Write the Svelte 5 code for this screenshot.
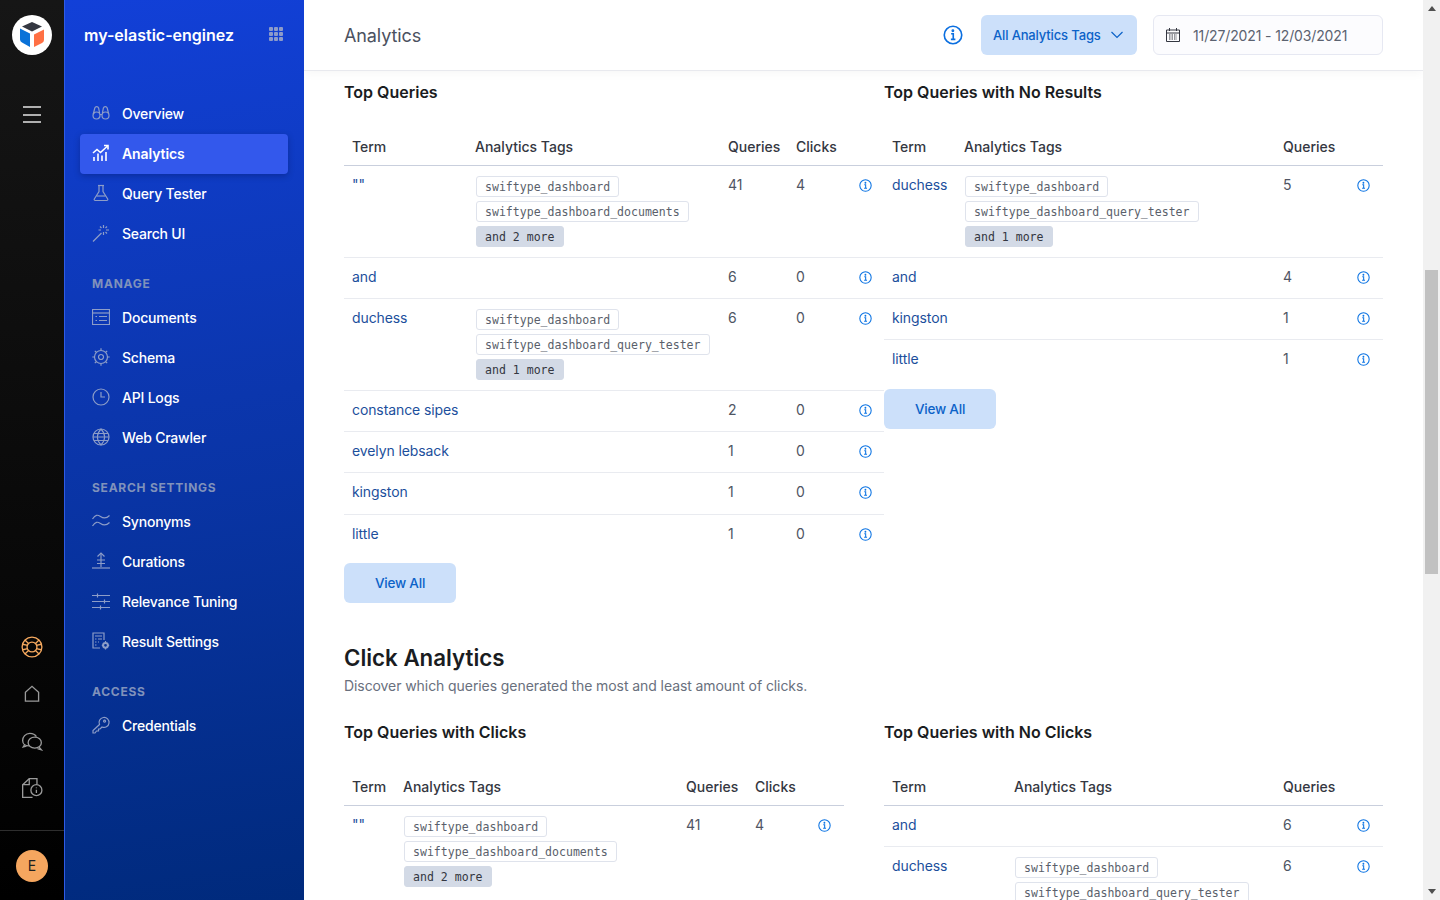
<script>
  const icons = {
    overview: ['M1 11.5a3.5 3.5 0 1 0 7 0a3.5 3.5 0 1 0-7 0', 'M10 11.5a3.5 3.5 0 1 0 7 0a3.5 3.5 0 1 0-7 0', 'M1.3 10l1.5-6a2 2 0 0 1 3.8 0l1 5', 'M16.7 10l-1.5-6a2 2 0 0 0-3.8 0l-1 5', 'M8 10.5h2'],
    analytics: ['M1 9l4-3.5 3.5 3L15.5 2', 'M12 1.5h4v4', 'M2 17v-4M6 17v-7.5M10 17v-5.5M14 17v-9'],
    tester: ['M6 1.5h6', 'M7 1.5v6L2.3 15a1 1 0 0 0 .9 1.5h11.6a1 1 0 0 0 .9-1.5L11 7.5v-6', 'M4.6 12h8.8'],
    searchui: ['M1 17.5L9.5 9', 'M11.5 1v3M11.5 8v3M6.5 6h2.5M14 6h3M8 2.5l1.5 1.5M15 2.5L13.5 4M15 9.5L13.5 8'],
    documents: ['M.5 1.5h17v15H.5z', 'M.5 5h17', 'M3.5 8.5h1.5M7 8.5h8M3.5 12.5h1.5M7 12.5h8'],
    schema: ['M9 2.5a6.5 6.5 0 1 0 0 13a6.5 6.5 0 1 0 0-13z', 'M9 6.5a2.5 2.5 0 1 0 0 5a2.5 2.5 0 1 0 0-5z', 'M9 .3v2.2M9 15.5v2.2M.3 9h2.2M15.500 9h2.200M2.800 2.800l1.600 1.600M13.600 13.600l1.600 1.600M15.200 2.800l-1.600 1.600M4.400 13.600l-1.600 1.600'],
    logs: ['M9 1a8 8 0 1 0 0 16a8 8 0 1 0 0-16z', 'M9 4v5h4'],
    crawler: ['M9 1a8 8 0 1 0 0 16a8 8 0 1 0 0-16z', 'M1 9h16M2 5.5h14M2 12.5h14', 'M9 1c-4.7 5-4.7 11 0 16M9 1c4.7 5 4.7 11 0 16'],
    synonyms: ['M.5 7c3-4.5 5-4.5 8-2.5s5.5 2.5 9-1', 'M.5 14c3-4.5 5-4.5 8-2.5s5.5 2.5 9-1'],
    curations: ['M9 1v14', 'M5.5 4.5L9 1l3.5 3.5', 'M5 8h8M5 11.5h8', 'M0 16h18'],
    relevance: ['M0 3.5h18M0 9.5h18M0 15.5h18', 'M5.5 1.5v4M12.5 7.5v4M8.5 13.5v4'],
    result: ['M8 16H1V1h11v7', 'M3 4h7M3 7h1.5M6 7h4M3 10h1.5M6 10h1M3 13h1.5', 'M13.5 9v1.5M13.5 16v1.5M9.8 13.3h1.5M15.7 13.3h1.5'],
    credentials: ['M7.5 8.5a5 5 0 1 1 2.5 2.5l-2 2H6.5v2h-2l-1.5 2H1v-2.5z', 'M12.5 4.2a1 1 0 1 0 .1 0z']
  };

  const railIcons = {
    help: ['M10 1a9 9 0 1 0 0 18a9 9 0 1 0 0-18z', 'M10 5.5a4.5 4.5 0 1 0 0 9a4.5 4.5 0 1 0 0-9z', 'M3.6 3.6l3.2 3.2M16.4 3.6l-3.2 3.2M3.6 16.4l3.2-3.2M16.4 16.4l-3.2-3.2', 'M1.6 7.5l4.5 1M18.4 7.5l-4.5 1M1.6 12.5l4.5-1M18.4 12.5l-4.5-1'],
    home: ['M4 16.5V8.5L10 3l6 5.5v8z'],
    chat: ['M7.5 14.5C4 14.5 1.5 12.5 1.5 9.5S4 3 8 3c3 0 5 1.2 6 3', 'M3.5 13L2 15.5l3-.8', 'M12.5 6.5c3.5 0 6 2.3 6 5s-2.5 5-6 5-6-2.3-6-5 2.5-5 6-5z', 'M16.5 15.5l2 2.5-3.5-1'],
    news: ['M10.5 18.5h-9V7l6-5.5h7v5', 'M7.5 1.5V7h-6', 'M14 7a5 5 0 1 0 0 10a5 5 0 1 0 0-10z', 'M14 11.5v3M14 9.5v.8']
  };

  const groups = [
    { items: [['overview', 'Overview'], ['analytics', 'Analytics'], ['tester', 'Query Tester'], ['searchui', 'Search UI']] },
    { label: 'MANAGE', items: [['documents', 'Documents'], ['schema', 'Schema'], ['logs', 'API Logs'], ['crawler', 'Web Crawler']] },
    { label: 'SEARCH SETTINGS', items: [['synonyms', 'Synonyms'], ['curations', 'Curations'], ['relevance', 'Relevance Tuning'], ['result', 'Result Settings']] },
    { label: 'ACCESS', items: [['credentials', 'Credentials']] }
  ];

  const d = 'swiftype_dashboard';
  const dd = 'swiftype_dashboard_documents';
  const dq = 'swiftype_dashboard_query_tester';

  const topQueries = [
    ['""', [d, dd], 2, 41, 4],
    ['and', [], 0, 6, 0],
    ['duchess', [d, dq], 1, 6, 0],
    ['constance sipes', [], 0, 2, 0],
    ['evelyn lebsack', [], 0, 1, 0],
    ['kingston', [], 0, 1, 0],
    ['little', [], 0, 1, 0]
  ];
  const noResults = [
    ['duchess', [d, dq], 1, 5],
    ['and', [], 0, 4],
    ['kingston', [], 0, 1],
    ['little', [], 0, 1]
  ];
  const withClicks = [['""', [d, dd], 2, 41, 4]];
  const noClicks = [
    ['and', [], 0, 6],
    ['duchess', [d, dq], 1, 6]
  ];
</script>

{#snippet info(size)}
  <svg class="info" width={size} height={size} viewBox="0 0 16 16" fill="none" stroke="currentColor" stroke-width="1.3">
    <circle cx="8" cy="8" r="7" />
    <path d="M6.5 7h1.7v4.5M6.3 11.5h3.6" />
    <circle cx="7.9" cy="4.6" r=".5" fill="currentColor" />
  </svg>
{/snippet}

{#snippet dataTable(variant, rows, clicks)}
  <table class={variant}>
    <colgroup>
      <col class="c-term" /><col class="c-tags" /><col class="c-queries" />
      {#if clicks}<col class="c-clicks" />{/if}
      <col class="c-info" />
    </colgroup>
    <thead>
      <tr>
        <th>Term</th><th>Analytics Tags</th><th>Queries</th>
        {#if clicks}<th>Clicks</th>{/if}
        <th></th>
      </tr>
    </thead>
    <tbody>
      {#each rows as row}
        <tr>
          <td class="term">{row[0]}</td>
          <td>
            {#if row[1].length}
              <div class="tags">
                {#each row[1] as tag}<span class="tag">{tag}</span>{/each}
                <span class="tag more">and {row[2]} more</span>
              </div>
            {/if}
          </td>
          <td class="num">{row[3]}</td>
          {#if clicks}<td class="num">{row[4]}</td>{/if}
          <td class="act">{@render info(13)}</td>
        </tr>
      {/each}
    </tbody>
  </table>
{/snippet}

<div class="app">
  <aside class="rail">
    <div class="logo">
      <svg width="26" height="26" viewBox="0 0 26 26">
        <path d="M13 0l10 4.5-10 5-10-5z" fill="#343741" />
        <path d="M1 6.5l10 5V25l-8-4.500q-2-1-2-3z" fill="#0a72d8" />
        <path d="M15 12.500l10-5V18q0 2-2 3l-8 4z" fill="#ff7044" />
      </svg>
    </div>
    <div class="burger"><span></span><span></span><span></span></div>
    <div class="rail-icons">
      {#each Object.entries(railIcons) as [name, paths]}
        <svg class={name === 'help' ? 'help' : ''} width="22" height="22" viewBox="0 0 20 20" fill="none" stroke="currentColor" stroke-width="1.2">
          {#each paths as p}<path d={p} />{/each}
        </svg>
      {/each}
    </div>
    <div class="rail-foot"><span class="avatar">E</span></div>
  </aside>

  <nav class="side">
    <div class="engine">
      <span>my-elastic-enginez</span>
      <div class="dots">{#each Array(9) as _}<i></i>{/each}</div>
    </div>
    {#each groups as group}
      {#if group.label}<div class="label">{group.label}</div>{/if}
      {#each group.items as [icon, text]}
        <div class="item" class:active={text === 'Analytics'}>
          <svg width="18" height="18" viewBox="0 0 18 18" fill="none" stroke="currentColor" stroke-width={text === 'Analytics' ? 1.6 : 1.2}>
            {#each icons[icon] as p}<path d={p} />{/each}
            {#if icon === 'result'}<circle cx="13.5" cy="13.3" r="2.4" stroke-width="2" />{/if}
          </svg>
          <span>{text}</span>
        </div>
      {/each}
    {/each}
  </nav>

  <div class="main">
    <header>
      <h1>Analytics</h1>
      <div class="controls">
        <span class="head-info">{@render info(20)}</span>
        <div class="select">
          <span>All Analytics Tags</span>
          <svg width="12" height="8" viewBox="0 0 12 8" fill="none" stroke="currentColor" stroke-width="1.2"><path d="M.5 1L6 6.5 11.5 1" /></svg>
        </div>
        <div class="date">
          <svg width="14" height="14" viewBox="0 0 14 14" fill="none" stroke="#343741" stroke-width="1">
            <path d="M.5 2h13v11.5H.5zM.5 5h13M3.5 0v3M10.5 0v3" />
            <path d="M3 7h8M3 9h8M3 11h8" stroke-dasharray="1.5 1" />
          </svg>
          <span>11/27/2021 - 12/03/2021</span>
        </div>
      </div>
    </header>

    <div class="content">
      <div class="pair">
        <section>
          <h3>Top Queries</h3>
          {@render dataTable('t1', topQueries, true)}
          <button>View All</button>
        </section>
        <section>
          <h3>Top Queries with No Results</h3>
          {@render dataTable('t2', noResults, false)}
          <button>View All</button>
        </section>
      </div>

      <h2>Click Analytics</h2>
      <p class="sub">Discover which queries generated the most and least amount of clicks.</p>

      <div class="pair">
        <section>
          <h3>Top Queries with Clicks</h3>
          {@render dataTable('t3', withClicks, true)}
        </section>
        <section>
          <h3>Top Queries with No Clicks</h3>
          {@render dataTable('t4', noClicks, false)}
        </section>
      </div>
    </div>
  </div>

  <div class="scrollbar">
    <span class="arrow up"></span>
    <div class="thumb"></div>
    <span class="arrow down"></span>
  </div>
</div>

<style>
  :global(body) {
    margin: 0;
    overflow: hidden;
    font-family: Inter, "Liberation Sans", sans-serif;
    font-size: 14px;
    background: #fff;
  }
  .app {
    display: flex;
    height: 100vh;
    overflow: hidden;
  }

  /* dark rail */
  .rail {
    width: 64px;
    flex: none;
    display: flex;
    flex-direction: column;
    align-items: center;
    background: linear-gradient(180deg, #161616, #000);
    color: #9a9a9a;
  }
  .logo {
    width: 40px;
    height: 40px;
    margin-top: 15px;
    border-radius: 50%;
    background: #fff;
    display: flex;
    align-items: center;
    justify-content: center;
  }
  .burger {
    margin-top: 51px;
    display: flex;
    flex-direction: column;
    gap: 5.5px;
  }
  .burger span {
    display: block;
    width: 18px;
    height: 2px;
    background: #b0b0b0;
  }
  .rail-icons {
    margin-top: auto;
    display: flex;
    flex-direction: column;
    align-items: center;
    gap: 25px;
    padding-bottom: 31px;
  }
  .help {
    color: #f6a95f;
  }
  .rail-foot {
    width: 100%;
    height: 69px;
    border-top: 1px solid #2e2e2e;
    display: flex;
    align-items: center;
    justify-content: center;
  }
  .avatar {
    width: 32px;
    height: 32px;
    border-radius: 50%;
    background: #f5a65f;
    color: #1f1f1f;
    display: flex;
    align-items: center;
    justify-content: center;
    font-size: 14px;
  }

  /* blue sidebar */
  .side {
    width: 240px;
    flex: none;
    box-sizing: border-box;
    padding: 0 16px 0 15px;
    border-left: 1px solid #2f5ce6;
    background: linear-gradient(172deg, #1240d8 0%, #0b36ad 45%, #002a7c 100%);
    color: #fff;
  }
  .engine {
    height: 70px;
    margin-bottom: 24px;
    padding: 0 5px 0 4px;
    display: flex;
    align-items: center;
    justify-content: space-between;
    font-size: 16px;
    font-weight: 600;
  }
  .dots {
    display: grid;
    grid-template-columns: repeat(3, 4px);
    gap: 1px;
    margin-top: -2px;
  }
  .dots i {
    width: 4px;
    height: 4px;
    border-radius: 1px;
    background: #8c9bc9;
  }
  .label {
    padding: 20px 12px 4px;
    line-height: 20px;
    font-size: 12px;
    font-weight: 700;
    letter-spacing: 0.75px;
    color: #8092bb;
  }
  .item {
    height: 40px;
    padding: 0 12px;
    box-sizing: border-box;
    display: flex;
    align-items: center;
    gap: 12px;
    border-radius: 4px;
    font-weight: 500;
    letter-spacing: -0.2px;
    color: #fff;
  }
  .item span {
    margin-top: -2px;
  }
  .item svg {
    flex: none;
    margin-top: -2px;
    color: #8d9dc8;
  }
  .active {
    background: #3358ec;
    font-weight: 600;
    letter-spacing: -0.1px;
    box-shadow: 0 2px 6px rgba(0, 0, 40, 0.25);
  }
  .active svg {
    color: #fff;
  }

  /* main column */
  .main {
    flex: 1;
    min-width: 0;
    display: flex;
    flex-direction: column;
    overflow: hidden;
  }
  header {
    position: relative;
    z-index: 1;
    height: 70px;
    flex: none;
    padding: 0 40px;
    display: flex;
    align-items: center;
    justify-content: space-between;
    border-bottom: 1px solid #e8e9ee;
    box-shadow: 0 2px 10px rgba(0, 0, 0, 0.04);
    background: #fff;
  }
  h1 {
    margin: 0;
    font-size: 18px;
    font-weight: 400;
    letter-spacing: -0.1px;
    color: #4b5160;
  }
  .controls {
    display: flex;
    align-items: center;
  }
  .head-info {
    display: flex;
    margin-right: 18px;
    color: #0b6fe0;
  }
  .select {
    width: 156px;
    height: 40px;
    box-sizing: border-box;
    padding: 0 14px 0 12px;
    display: flex;
    align-items: center;
    justify-content: space-between;
    border-radius: 6px;
    background: #cce0fa;
    color: #0b62c8;
    font-size: 13px;
    font-weight: 500;
    letter-spacing: -0.15px;
    white-space: nowrap;
  }
  .date {
    width: 230px;
    height: 40px;
    margin-left: 16px;
    box-sizing: border-box;
    padding: 0 12px;
    display: flex;
    align-items: center;
    gap: 13px;
    border: 1px solid #e6e8f2;
    border-radius: 6px;
    background: #fcfcfe;
    color: #5b6270;
    letter-spacing: -0.13px;
  }
  .content {
    flex: 1;
    min-height: 0;
    padding: 11px 40px 0;
    overflow: hidden;
  }
  .pair {
    display: grid;
    grid-template-columns: 500px 499px;
    column-gap: 40px;
    align-items: start;
  }
  h2 {
    margin: 40px 0 0;
    font-size: 22.3px;
    line-height: 30px;
    font-weight: 600;
    color: #1a1c21;
  }
  .sub {
    margin: 3px 0 26px;
    line-height: 20px;
    color: #69707d;
    letter-spacing: -0.08px;
  }
  h3 {
    margin: 0 0 27px;
    font-size: 16px;
    line-height: 20px;
    font-weight: 600;
    color: #1a1c21;
  }

  /* tables */
  table {
    table-layout: fixed;
    border-collapse: separate;
    border-spacing: 0;
  }
  .t1 { width: 540px; }
  .t2, .t4 { width: 499px; }
  .t3 { width: 500px; }
  .c-info { width: 34px; }
  .t1 .c-term { width: 123px; }
  .t1 .c-tags { width: 253px; }
  .t1 .c-queries { width: 68px; }
  .t1 .c-clicks { width: 62px; }
  .t2 .c-term { width: 72px; }
  .t2 .c-tags { width: 319px; }
  .t2 .c-queries { width: 74px; }
  .t3 .c-term { width: 51px; }
  .t3 .c-tags { width: 283px; }
  .t3 .c-queries { width: 69px; }
  .t3 .c-clicks { width: 63px; }
  .t4 .c-term { width: 122px; }
  .t4 .c-tags { width: 269px; }
  .t4 .c-queries { width: 74px; }
  th {
    height: 37px;
    padding: 0 8px 1px;
    box-sizing: border-box;
    text-align: left;
    font-weight: 500;
    color: #343741;
    white-space: nowrap;
    border-bottom: 1px solid #c9cfdd;
  }
  td {
    padding: 9px 8px 11px;
    line-height: 20.33px;
    vertical-align: top;
    color: #4f5563;
    border-bottom: 1px solid #e9ebf0;
    white-space: nowrap;
  }
  tbody tr:last-child td {
    border-bottom-color: transparent;
  }
  .term {
    color: #1c4f9c;
    letter-spacing: -0.1px;
  }
  td.act {
    padding: 10px 0 0 7.5px;
    color: #0b73e3;
  }
  .t1 td.act {
    padding-left: 8.5px;
  }
  .info {
    display: block;
    margin-top: 3px;
  }
  .head-info .info {
    margin-top: 0;
  }
  .tags {
    height: 69.67px;
    margin: 1px 0 0 1px;
    display: flex;
    flex-direction: column;
    align-items: flex-start;
    gap: 4px;
  }
  .tag {
    height: 21px;
    box-sizing: border-box;
    padding: 0 8px;
    border: 1px solid #dfe3ec;
    border-radius: 3px;
    font-family: "DejaVu Sans Mono", "Liberation Mono", monospace;
    font-size: 11.56px;
    line-height: 21px;
    color: #5a5f6b;
    background: #fff;
  }
  .more {
    background: #d3dae6;
    border-color: #d3dae6;
    color: #343741;
  }
  button {
    display: block;
    width: 112px;
    height: 40px;
    margin-top: 7px;
    padding: 0;
    border: 0;
    border-radius: 6px;
    background: #cce0fa;
    color: #0b62c8;
    font: 500 13.5px Inter, "Liberation Sans", sans-serif;
    letter-spacing: -0.2px;
  }

  /* drawn scrollbar */
  .scrollbar {
    width: 17px;
    flex: none;
    display: flex;
    flex-direction: column;
    align-items: center;
    background: #f1f1f1;
  }
  .arrow {
    width: 0;
    height: 0;
    border-left: 4px solid transparent;
    border-right: 4px solid transparent;
  }
  .up {
    margin-top: 6px;
    border-bottom: 5px solid #505050;
  }
  .down {
    margin-top: auto;
    margin-bottom: 6px;
    border-top: 5px solid #505050;
  }
  .thumb {
    width: 13px;
    height: 304px;
    margin-top: 259px;
    background: #c1c1c1;
  }
</style>
